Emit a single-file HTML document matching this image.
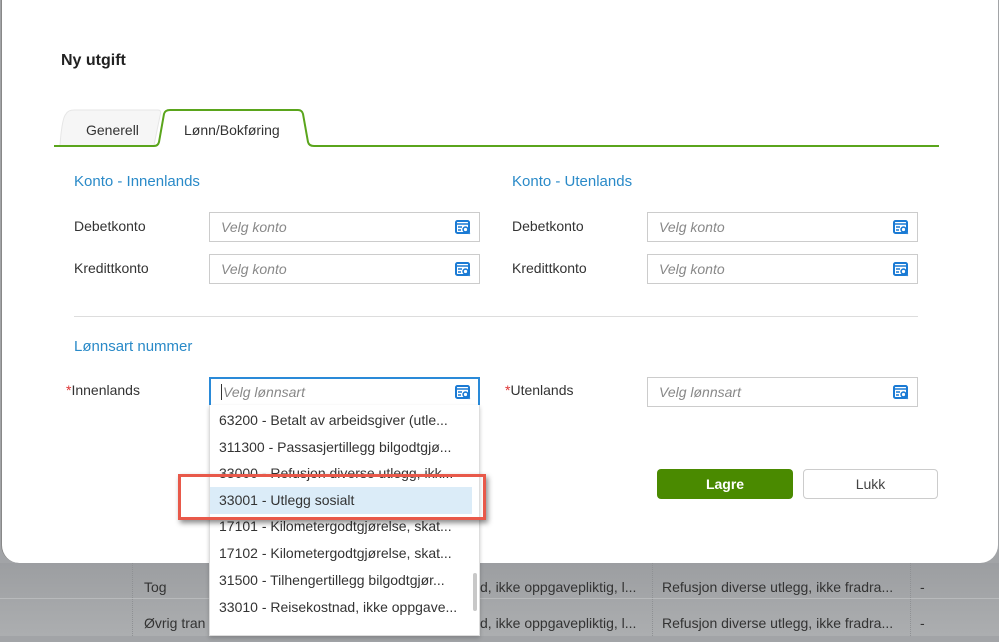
<!DOCTYPE html>
<html><head><meta charset="utf-8"><style>
*{box-sizing:border-box;margin:0;padding:0}
body{width:999px;height:636px;overflow:hidden;background:#a2a4a7;font-family:"Liberation Sans",sans-serif;position:relative;color:#333}
.bg{position:absolute;left:0;top:563px;width:999px;height:73px;background:linear-gradient(#9c9ea1,#acaeb0)}
.row{position:absolute;left:0;width:999px;height:36px;font-size:14px;color:#333}
.row span{position:absolute;top:9px;white-space:nowrap}
.vl{position:absolute;top:563px;height:73px;border-left:1px dotted #8f9194}
.dlg{position:absolute;left:1px;top:-10px;width:997px;height:573px;background:#fff;border-radius:0 0 18px 18px;border-left:1px solid #888}
.a{position:absolute;white-space:nowrap}
.lbl{font-size:14px;color:#333}
.h{font-size:15px;color:#2a8ac8}
.inp{position:absolute;height:30px;border:1px solid #ccc;background:#fff}
.inp i{position:absolute;left:11px;top:6px;font-size:14px;color:#888}
.ic{position:absolute;right:8px;top:7px}
.dd{position:absolute;left:209px;top:405px;width:271px;height:231px;background:#fff;border:1px solid #ddd;border-top:none;box-shadow:0 2px 4px rgba(0,0,0,.2)}
.dd div{position:absolute;left:0;width:262px;height:27px;padding-left:9px;font-size:14px;color:#333;line-height:27px;white-space:nowrap}
</style></head><body>
<div class="bg"></div>
<div class="vl" style="left:132px"></div><div class="vl" style="left:652px"></div><div class="vl" style="left:910px"></div>
<div style="position:absolute;left:0;top:598px;width:999px;border-top:1px solid #b8babc"></div>
<div class="row" style="top:570px"><span style="left:144px">Tog</span><span style="left:480px">d, ikke oppgavepliktig, l...</span><span style="left:662px">Refusjon diverse utlegg, ikke fradra...</span><span style="left:920px">-</span></div>
<div class="row" style="top:606px"><span style="left:144px">Øvrig tran</span><span style="left:480px">d, ikke oppgavepliktig, l...</span><span style="left:662px">Refusjon diverse utlegg, ikke fradra...</span><span style="left:920px">-</span></div>
<div class="dlg"></div>
<div class="a" style="left:61px;top:52px;font-size:16px;font-weight:bold;color:#222">Ny utgift</div>
<svg class="a" style="left:54px;top:108px" width="885" height="42">
<path d="M6 37 Q8 10 12 6 Q14 2 20 2 L104 2 Q108 2 106 8 L100 37" fill="#f6f6f6" stroke="#e6e6e6"/>
<path d="M0 38 L100 38 Q104 38 105 34 L110 6 Q111 2 116 2 L244 2 Q248 2 249 6 L254 34 Q255 38 260 38 L885 38" fill="none" stroke="#5aa51c" stroke-width="2"/>
</svg>
<div class="a lbl" style="left:86px;top:122px">Generell</div>
<div class="a lbl" style="left:184px;top:122px">Lønn/Bokføring</div>
<div class="a h" style="left:74px;top:173px">Konto - Innenlands</div>
<div class="a h" style="left:512px;top:173px">Konto - Utenlands</div>
<div class="a lbl" style="left:74px;top:218px">Debetkonto</div>
<div class="a lbl" style="left:74px;top:260px">Kredittkonto</div>
<div class="a lbl" style="left:512px;top:218px">Debetkonto</div>
<div class="a lbl" style="left:512px;top:260px">Kredittkonto</div>
<div class="inp" style="left:209px;top:212px;width:271px"><i>Velg konto</i><svg class="ic" width="16" height="15" viewBox="0 0 16 15"><rect x="1" y="1" width="13" height="12" rx="1.5" fill="none" stroke="#1a7ad4" stroke-width="2"/><path d="M1 4h13M3 7h4M3 10h3" stroke="#1a7ad4" stroke-width="1.6"/><circle cx="10.5" cy="9.5" r="2.4" fill="#fff" stroke="#1a7ad4" stroke-width="1.6"/><path d="M12.3 11.3l2.4 2.4" stroke="#1a7ad4" stroke-width="1.8"/></svg></div>
<div class="inp" style="left:209px;top:254px;width:271px"><i>Velg konto</i><svg class="ic" width="16" height="15" viewBox="0 0 16 15"><rect x="1" y="1" width="13" height="12" rx="1.5" fill="none" stroke="#1a7ad4" stroke-width="2"/><path d="M1 4h13M3 7h4M3 10h3" stroke="#1a7ad4" stroke-width="1.6"/><circle cx="10.5" cy="9.5" r="2.4" fill="#fff" stroke="#1a7ad4" stroke-width="1.6"/><path d="M12.3 11.3l2.4 2.4" stroke="#1a7ad4" stroke-width="1.8"/></svg></div>
<div class="inp" style="left:647px;top:212px;width:271px"><i>Velg konto</i><svg class="ic" width="16" height="15" viewBox="0 0 16 15"><rect x="1" y="1" width="13" height="12" rx="1.5" fill="none" stroke="#1a7ad4" stroke-width="2"/><path d="M1 4h13M3 7h4M3 10h3" stroke="#1a7ad4" stroke-width="1.6"/><circle cx="10.5" cy="9.5" r="2.4" fill="#fff" stroke="#1a7ad4" stroke-width="1.6"/><path d="M12.3 11.3l2.4 2.4" stroke="#1a7ad4" stroke-width="1.8"/></svg></div>
<div class="inp" style="left:647px;top:254px;width:271px"><i>Velg konto</i><svg class="ic" width="16" height="15" viewBox="0 0 16 15"><rect x="1" y="1" width="13" height="12" rx="1.5" fill="none" stroke="#1a7ad4" stroke-width="2"/><path d="M1 4h13M3 7h4M3 10h3" stroke="#1a7ad4" stroke-width="1.6"/><circle cx="10.5" cy="9.5" r="2.4" fill="#fff" stroke="#1a7ad4" stroke-width="1.6"/><path d="M12.3 11.3l2.4 2.4" stroke="#1a7ad4" stroke-width="1.8"/></svg></div>
<div class="a" style="left:74px;top:316px;width:844px;border-top:1px solid #ddd"></div>
<div class="a h" style="left:74px;top:338px">Lønnsart nummer</div>
<div class="a lbl" style="left:66px;top:382px"><span style="color:#d33">*</span>Innenlands</div>
<div class="a lbl" style="left:505px;top:382px"><span style="color:#d33">*</span>Utenlands</div>
<div class="inp" style="left:209px;top:377px;width:271px;border:2px solid #2a8ad8"><i style="left:10px;top:5px;border-left:1px solid #333;padding-left:1px">Velg lønnsart</i><svg class="ic" style="top:6px;right:7px" width="16" height="15" viewBox="0 0 16 15"><rect x="1" y="1" width="13" height="12" rx="1.5" fill="none" stroke="#1a7ad4" stroke-width="2"/><path d="M1 4h13M3 7h4M3 10h3" stroke="#1a7ad4" stroke-width="1.6"/><circle cx="10.5" cy="9.5" r="2.4" fill="#fff" stroke="#1a7ad4" stroke-width="1.6"/><path d="M12.3 11.3l2.4 2.4" stroke="#1a7ad4" stroke-width="1.8"/></svg></div>
<div class="inp" style="left:647px;top:377px;width:271px"><i>Velg lønnsart</i><svg class="ic" width="16" height="15" viewBox="0 0 16 15"><rect x="1" y="1" width="13" height="12" rx="1.5" fill="none" stroke="#1a7ad4" stroke-width="2"/><path d="M1 4h13M3 7h4M3 10h3" stroke="#1a7ad4" stroke-width="1.6"/><circle cx="10.5" cy="9.5" r="2.4" fill="#fff" stroke="#1a7ad4" stroke-width="1.6"/><path d="M12.3 11.3l2.4 2.4" stroke="#1a7ad4" stroke-width="1.8"/></svg></div>
<div class="dd">
<div style="top:2px">63200 - Betalt av arbeidsgiver (utle...</div>
<div style="top:29px">311300 - Passasjertillegg bilgodtgjø...</div>
<div style="top:55px">33000 - Refusjon diverse utlegg, ikk...</div>
<div style="top:82px;background:#dbecf8">33001 - Utlegg sosialt</div>
<div style="top:108px">17101 - Kilometergodtgjørelse, skat...</div>
<div style="top:135px">17102 - Kilometergodtgjørelse, skat...</div>
<div style="top:162px">31500 - Tilhengertillegg bilgodtgjør...</div>
<div style="top:189px">33010 - Reisekostnad, ikke oppgave...</div>
<span style="position:absolute;left:263px;top:168px;width:4px;height:38px;background:#c8c8c8;border-radius:2px"></span>
</div>
<div class="a" style="left:178px;top:474px;width:308px;height:46px;border:3px solid #e8594a;box-shadow:2px 3px 5px rgba(0,0,0,.45)"></div>
<div class="a" style="left:657px;top:469px;width:136px;height:30px;background:#4a8a00;border-radius:4px;color:#fff;font-size:14px;font-weight:bold;text-align:center;line-height:30px">Lagre</div>
<div class="a" style="left:803px;top:469px;width:135px;height:30px;background:#fff;border:1px solid #ccc;border-radius:4px;color:#444;font-size:14px;text-align:center;line-height:28px">Lukk</div>
</body></html>
